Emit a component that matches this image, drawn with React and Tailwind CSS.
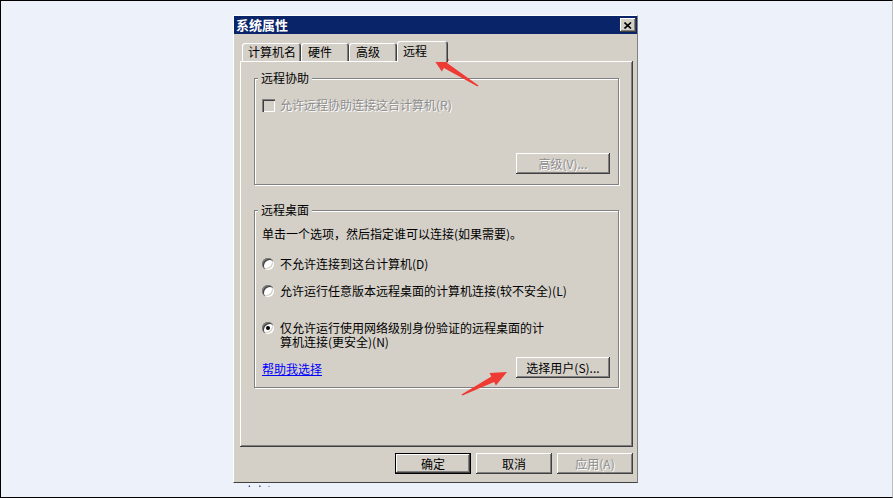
import React from 'react';

const raised =
  'shadow-[inset_-1px_-1px_0_#404040,inset_1px_1px_0_#ffffff,inset_-2px_-2px_0_#808080,inset_2px_2px_0_#d4d0c8]';

const disabledText = 'text-[#8d8d8d] [text-shadow:1px_1px_0_#ffffff]';

const Button = ({ children, disabled, isDefault, className = '' }) => (
  <div
    className={`h-[21px] flex items-center justify-center bg-[#D4D0C8] ${raised} ${
      isDefault ? 'border border-black' : ''
    } ${disabled ? disabledText : 'text-black'} ${className}`}
  >
    {children}
  </div>
);

const Radio = ({ checked }) => (
  <span className="w-[12px] h-[12px] shrink-0 rounded-full bg-white flex items-center justify-center shadow-[inset_1px_1px_0_#808080,inset_2px_2px_0_#404040,inset_-1px_-1px_0_#ffffff,inset_-2px_-2px_0_#d4d0c8]">
    {checked && <span className="w-[4px] h-[4px] rounded-full bg-black" />}
  </span>
);

const Tab = ({ label, width, active, pl = 'pl-[6px]' }) => (
  <div
    className={`${width} ${pl} ${
      active ? 'h-[21px] pt-[3px]' : 'h-[18px] mb-[1px] pt-[2px]'
    } rounded-t-[3px] bg-[#D4D0C8] shadow-[inset_1px_1px_0_#ffffff,inset_-1px_0_0_#404040,inset_-2px_0_0_#808080]`}
  >
    {label}
  </div>
);

const Group = ({ title, className = '', children }) => (
  <fieldset
    className={`m-0 p-0 border border-[#808080] shadow-[inset_1px_1px_0_#ffffff,1px_1px_0_#ffffff] ${className}`}
  >
    <legend className="ml-[3px] px-[3px] bg-[#D4D0C8] leading-[14px]">{title}</legend>
    {children}
  </fieldset>
);

export default function App() {
  return (
    <div className="relative w-[893px] h-[498px] overflow-hidden bg-[#EDF1FA] border border-black border-r-[#bfbfbf] font-['Noto_Sans_CJK_SC','Liberation_Sans',sans-serif] text-[12px] leading-[14px] text-black">
      {/* dialog */}
      <div className="ml-[232px] mt-[14px] w-[405px] bg-[#D4D0C8] border-t border-l border-t-white border-l-white border-r border-r-[#808080] border-b border-b-[#404040]">
        {/* title bar */}
        <div className="h-[18px] bg-[#0A246A] flex items-center justify-between pl-[2px] pr-[1px]">
          <span className="text-white font-bold text-[13px] leading-[16px]">系统属性</span>
          <div className={`w-[16px] h-[14px] bg-[#D4D0C8] flex items-center justify-center ${raised}`}>
            <svg width="8" height="7" viewBox="0 0 8 7">
              <path d="M0.5 0.5 L7 6.5 M7 0.5 L0.5 6.5" stroke="#000" strokeWidth="1.6" />
            </svg>
          </div>
        </div>

        <div className="pl-[6px] pt-[7px]">
          {/* tabs */}
          <div className="relative z-10 h-[21px] flex items-end pl-[2px]">
            <Tab label="计算机名" width="w-[59px]" />
            <Tab label="硬件" width="w-[48px]" pl="pl-[7px]" />
            <Tab label="高级" width="w-[48px]" pl="pl-[7px]" />
            <Tab label="远程" width="w-[51px]" active />
          </div>

          {/* panel */}
          <div className="-mt-px w-[393px] h-[386px] px-[14px] pt-[10px] bg-[#D4D0C8] shadow-[inset_-1px_-1px_0_#404040,inset_1px_1px_0_#ffffff,inset_-2px_-2px_0_#808080]">
            <Group title="远程协助">
              <div className="flex flex-col pl-[7px] pr-[8px] pt-[13px] pb-[10px]">
                <div className="h-[14px] flex items-center gap-[5px]">
                  <span className="w-[13px] h-[13px] bg-[#D4D0C8] shadow-[inset_1px_1px_0_#808080,inset_2px_2px_0_#404040,inset_-1px_-1px_0_#ffffff,inset_-2px_-2px_0_#d4d0c8]" />
                  <span className={disabledText}>允许远程协助连接这台计算机(R)</span>
                </div>
                <Button disabled className="self-end w-[94px] mt-[41px]">高级(V)...</Button>
              </div>
            </Group>

            <Group title="远程桌面" className="mt-[18px]">
              <div className="flex flex-col pl-[7px] pr-[8px] pb-[9px]">
                <div className="mt-[10px]">单击一个选项，然后指定谁可以连接(如果需要)。</div>
                <div className="mt-[16px] flex items-center gap-[6px]">
                  <Radio />
                  <span>不允许连接到这台计算机(D)</span>
                </div>
                <div className="mt-[13px] flex items-center gap-[6px]">
                  <Radio />
                  <span>允许运行任意版本远程桌面的计算机连接(较不安全)(L)</span>
                </div>
                <div className="mt-[23px] flex items-start gap-[6px]">
                  <span className="mt-px">
                    <Radio checked />
                  </span>
                  <span className="leading-[14px]">
                    仅允许运行使用网络级别身份验证的远程桌面的计
                    <br />
                    算机连接(更安全)(N)
                  </span>
                </div>
                <div className="mt-[8px] flex items-center justify-between">
                  <span className="mt-[3px] text-[#0000FF] underline">帮助我选择</span>
                  <Button className="w-[94px]">选择用户(S)...</Button>
                </div>
              </div>
            </Group>
          </div>

          {/* bottom buttons */}
          <div className="w-[393px] mt-[6px] pb-[8px] flex justify-end gap-[5px]">
            <Button isDefault className="w-[76px]">确定</Button>
            <Button className="w-[76px]">取消</Button>
            <Button disabled className="w-[76px]">应用(A)</Button>
          </div>
        </div>
      </div>

      {/* text peeking below the dialog */}
      <div className="ml-[240px] h-[4px] overflow-hidden">
        <div className="-mt-[1px] text-[#000080] text-[11px] leading-[14px]">ubdata</div>
      </div>

      {/* annotation arrows */}
      <svg className="absolute -left-px -top-px pointer-events-none" width="893" height="498">
        <polygon
          points="432,57 449.2,59.6 447.1,63 478.5,85.6 477.5,86.5 443.9,68 441.8,71.4"
          fill="#EE3B34"
        />
        <polygon
          points="507,372 495.9,385.5 494.1,382 462.5,395.6 461.5,394.4 491.3,376.6 489.5,373.1"
          fill="#EE3B34"
        />
      </svg>
    </div>
  );
}
